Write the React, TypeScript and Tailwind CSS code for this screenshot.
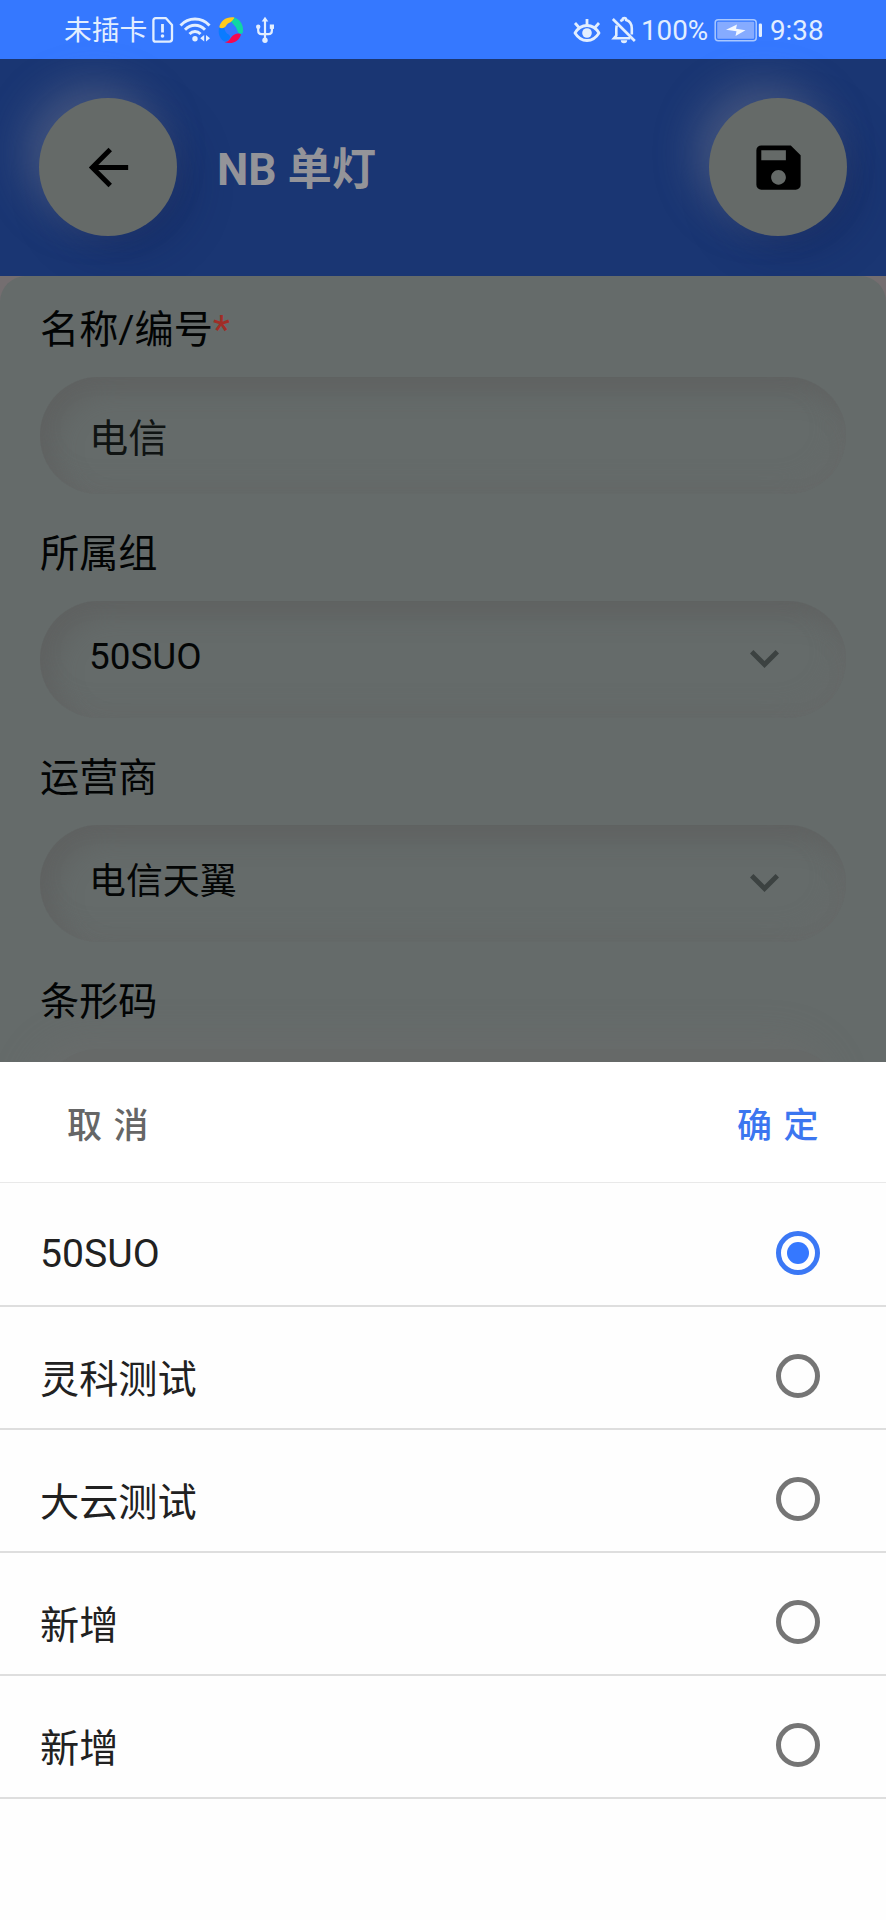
import React from "react";
import { MdArrowBack, MdSave } from "react-icons/md";

const groups = [
  { id: 1, name: "50SUO" },
  { id: 2, name: "灵科测试" },
  { id: 3, name: "大云测试" },
  { id: 4, name: "新增" },
  { id: 5, name: "新增" },
];

function StatusBar() {
  return (
    <div className="flex h-[59px] shrink-0 items-center bg-[#3578ff] pr-[63px] pl-[64px] text-[28px] leading-[40px] text-[#e2eeff]">
      <span className="w-[88px] pt-[3px] text-[27.8px] whitespace-nowrap">未插卡</span>
      <svg className="h-[28px] w-[22px]" viewBox="0 0 22 28" fill="none" stroke="currentColor" strokeWidth="2.3">
        <path d="M3.600 2.200h10.400l6 6.800V23a2.600 2.600 0 0 1-2.600 2.600H3.600A2.200 2.200 0 0 1 1.400 23.400V4.400A2.200 2.200 0 0 1 3.600 2.200z" strokeLinejoin="round" />
        <path d="M10.500 8v8.500" strokeWidth="2.800" />
        <circle cx="10.500" cy="20" r="1.800" fill="currentColor" stroke="none" />
      </svg>
      <svg className="ml-[5px] h-[28px] w-[32px]" viewBox="0 0 32 28" fill="none" stroke="currentColor" strokeWidth="2.900">
        <path d="M1.500 9.500C9.500 .9 22.500 .9 30.500 9.500" />
        <path d="M6 13.800c5.700-6 14.300-6 20 0" />
        <path d="M10.500 18c3.200-3.400 7.800-3.400 11 0" />
        <circle cx="16" cy="22.800" r="2.700" fill="currentColor" stroke="none" />
        <path d="M25.200 19v6.600l-4-3.300zM27 19v6.600l4-3.300z" fill="currentColor" stroke="none" />
      </svg>
      <svg className="ml-[7px] h-[28px] w-[26px]" viewBox="0 0 26 28">
        <path d="M1.300 11.200C2.500 4.500 8.500 .3 16.500 1.400c-1 2.700-2.300 4.200-4.500 5-3.400 1.200-3.500 3.400-5.200 4.800-1.600 1.300-4 1.500-5.500 0z" fill="#ffca1c" />
        <path d="M13.200 5.400c1.500-.8 2.800-2.500 3.300-4C23 4 26.300 10 24.600 17.200c-1.800 1-4 .2-4.900-1.800-1-2.300-1.200-3.900-3-5.700-1.300-1.300-2.400-2.900-3.500-4.300z" fill="#10d6a4" />
        <path d="M23 18.500c-1.500 6-7.500 9.500-14 8.300-1-.2-1.700-.5-2.300-.9 3.800-.1 5-2.700 6.800-5 2.400-3 7.200-4.800 9.500-2.400z" fill="#f5074f" />
        <path d="M1.100 11.800c2 1.200 4 .5 5.200-.4.400 3.500 1.800 5.600 4.300 7.200 1.700 1.200 2 2.600.8 4.300-1 1.500-3 2.600-4.900 2.600C1.800 23-.2 17.500 1.100 11.800z" fill="#0a7bff" />
      </svg>
      <svg className="ml-[11px] h-[28px] w-[20px]" viewBox="0 0 20 28" fill="none" stroke="currentColor" strokeWidth="2.200">
        <path d="M10 4v20M3.200 11v3.500c0 2.500 1.500 3.700 3.300 3.700h7c2 0 3.400-1.200 3.400-3.700V11" />
        <path d="M10 .8l3.300 4.800H6.700z" fill="currentColor" stroke="none" />
        <circle cx="10" cy="24.300" r="2.700" fill="currentColor" stroke="none" />
        <circle cx="3.200" cy="10.700" r="2.200" fill="currentColor" stroke="none" />
        <path d="M14.800 8.500h4.200v4.400h-4.200z" fill="currentColor" stroke="none" />
      </svg>
      <svg className="ml-auto h-[28px] w-[30px]" viewBox="0 0 30 28" fill="none" stroke="currentColor" strokeWidth="2.800">
        <path d="M3 17c3-5 7.500-7.500 12-7.500S24 12 27 17c-3 4.900-7.500 7.500-12 7.500S6 21.900 3 17z" strokeLinejoin="round" />
        <circle cx="15" cy="17" r="4.800" fill="currentColor" stroke="none" />
        <path d="M15 3v6M3 7l4 4.500M27 7l-4 4.500" />
      </svg>
      <svg className="ml-[9px] h-[28px] w-[26px]" viewBox="0 0 26 28" fill="none" stroke="currentColor" strokeWidth="2.600">
        <path d="M1.800 3l22 22" />
        <path d="M5.800 9.500c-.5 1.200-.5 2.300-.5 3.700v6.300l-2.300 2.700h16.300" />
        <path d="M9.300 5.200l2.200-1.200c.1-2.700 3.600-2.700 3.700 0 4 1.200 5.600 4.500 5.600 8.500v6" />
        <path d="M9.800 24.200h6.400a3.200 3 0 0 1-6.400 0z" fill="currentColor" stroke="none" />
      </svg>
      <span className="ml-[4px] w-[73px] pt-[2px] text-[27.8px] whitespace-nowrap">100%</span>
      <svg className="h-[24px] w-[49px]" viewBox="0 0 49 24">
        <rect x="1.200" y="1.700" width="41" height="21" rx="3" fill="none" stroke="#a9c8ff" strokeWidth="1.500" />
        <rect x="3.200" y="3.700" width="37" height="17" rx="1" fill="#86abff" />
        <path d="M23 6.500l-1 4.300 9.500 1.500-10 5.700 1-4.700-10.500-1.500z" fill="#f2f7ff" />
        <rect x="44.800" y="5.500" width="3.200" height="13.500" rx="1.200" fill="currentColor" />
      </svg>
      <span className="ml-[7px] w-[53px] pt-[2px] text-[27.8px] whitespace-nowrap">9:38</span>
    </div>
  );
}

function RoundButton({ children }: { children: React.ReactNode }) {
  return (
    <button className="flex size-[138px] items-center justify-center rounded-full bg-[#656a68] text-[59px] text-black shadow-[-14px_-14px_40px_rgba(138,138,150,0.36),14px_14px_40px_rgba(16,28,80,0.34)]">
      {children}
    </button>
  );
}

function Header() {
  return (
    <div className="flex h-[217px] shrink-0 items-center bg-[#1a3673] pr-[39px] pb-px pl-[39px]">
      <RoundButton>
        <MdArrowBack />
      </RoundButton>
      <h1 className="ml-[40px] flex-1 pt-[5px] text-[44.3px] leading-[60px] font-bold text-[#949499]">NB 单灯</h1>
      <RoundButton>
        <MdSave />
      </RoundButton>
    </div>
  );
}

function Chevron() {
  return (
    <svg className="mb-[2px] h-[18px] w-[29px]" viewBox="6 8.590 12 7.410" fill="#3c4241">
      <path d="M7.410 8.590 12 13.170l4.590-4.580L18 10l-6 6-6-6z" />
    </svg>
  );
}

function Label({ children }: { children: React.ReactNode }) {
  return <div className="h-[55px] text-[39.2px] leading-[55px] text-[#020404]">{children}</div>;
}

function Well({ children }: { children: React.ReactNode }) {
  return (
    <div className="mt-[19px] mb-[33px] flex h-[117px] items-center justify-between rounded-full pr-[67px] pl-[49px] text-[#040606] shadow-[inset_14px_14px_26px_rgba(88,85,86,0.4),inset_-8px_-8px_24px_rgba(105,107,107,0.35)]">
      {children}
    </div>
  );
}

function Form() {
  return (
    <div className="h-[786px] shrink-0 overflow-hidden bg-[#746e70]">
      <div className="h-full rounded-t-[26px] bg-[#656b6a] px-[40px] pt-[27px]">
        <Label>
          名称/编号<span className="text-[#a12d26]">*</span>
        </Label>
        <Well>
          <span className="pt-[7px] text-[39.2px] leading-[55px] text-[#101413]">电信</span>
        </Well>
        <Label>所属组</Label>
        <Well>
          <span className="pb-[6px] text-[36.9px] leading-[50px]">50SUO</span>
          <Chevron />
        </Well>
        <Label>运营商</Label>
        <Well>
          <span className="pb-[3px] text-[36.9px] leading-[50px]">电信天翼</span>
          <Chevron />
        </Well>
        <Label>条形码</Label>
        <div className="mt-[19px] h-[117px] rounded-full bg-[#666968] shadow-[-12px_-12px_36px_rgba(114,112,113,0.28)]" />
      </div>
    </div>
  );
}

function Radio({ checked }: { checked: boolean }) {
  return checked ? (
    <span className="flex size-[44px] items-center justify-center rounded-full border-[5px] border-[#3b78f5]">
      <span className="size-[22px] rounded-full bg-[#3578ff]" />
    </span>
  ) : (
    <span className="size-[44px] rounded-full border-[5px] border-[#757575]" />
  );
}

function Sheet() {
  return (
    <div className="flex flex-1 flex-col bg-white">
      <div className="flex h-[121px] items-center justify-between border-b border-[#e9e9e9] pr-[66px] pl-[67px] text-[35px] leading-[48px] font-medium">
        <button className="pt-[9px] tracking-[1.400px] text-[#666666]">取 消</button>
        <button className="pt-[9px] tracking-[1.400px] text-[#3b76f0]">确 定</button>
      </div>
      <div className="flex-1 bg-[#fefefe]">
        {groups.map((group, index) => (
          <div
            key={group.id}
            className="flex h-[123px] items-center justify-between border-b-2 border-[#dedede] pt-[17px] pr-[66px] pl-[40px] text-[39.2px] leading-[56px] text-[#212121] first:h-[124px]"
          >
            <span className={index === 0 ? "pt-[2px]" : "pt-[8px]"}>{group.name}</span>
            <Radio checked={index === 0} />
          </div>
        ))}
      </div>
    </div>
  );
}

export default function App() {
  return (
    <div className="flex h-[1920px] w-[886px] flex-col overflow-hidden font-['Roboto','Noto_Sans_CJK_SC',sans-serif]">
      <StatusBar />
      <Header />
      <Form />
      <Sheet />
    </div>
  );
}
